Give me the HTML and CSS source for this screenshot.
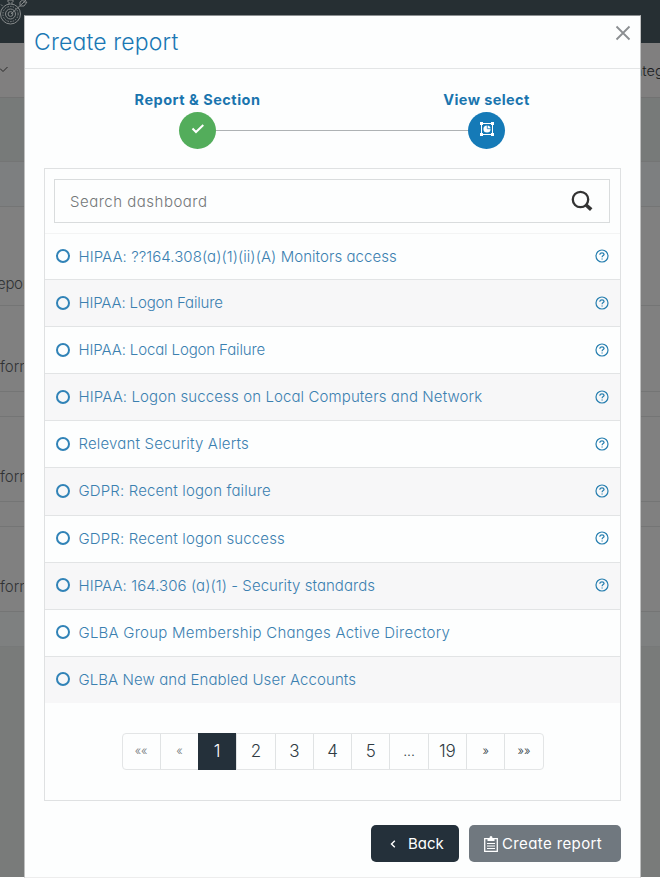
FILE: index.html
```html
<!DOCTYPE html>
<html lang="en">
<head>
<meta charset="utf-8">
<title>Create report</title>
<link rel="stylesheet" href="styles.css">
</head>
<body>
<svg class="defs" width="0" height="0">
  <symbol id="help" viewBox="0 0 14 14"><circle cx="7" cy="7" r="6" fill="none" stroke="currentColor" stroke-width="1.200"/><path d="M4.900 5.700V5.200Q5.100 3.800 7 3.800T9.100 5.300C9.100 6.700 7.100 6.500 7.100 8.300" fill="none" stroke="currentColor" stroke-width="1.200"/><path d="M6.500 9.400h1.200v1.200H6.500z" fill="currentColor"/></symbol>
</svg>
<div class="backdrop">
  <header class="topbar">
    <svg class="logo" width="28" height="28" viewBox="0 0 28 28" fill="none" stroke="#85898a" stroke-width="1">
      <circle cx="10.500" cy="15" r="10"/><circle cx="10.500" cy="15" r="7.600" stroke-dasharray="1.5 1.2"/><circle cx="10.500" cy="15" r="5"/><circle cx="10.500" cy="15" r="2.400"/>
      <path d="M8 3V1h5v2M9 5V3M12 5V3M2.500 7L1 5.500M11 15L23 4M20 6.500V3l4-3v3h3l-3 4h-4M22 5l4-4"/>
    </svg>
  </header>
  <nav class="subnav"><svg width="8" height="6" viewBox="0 0 8 6" fill="none" stroke="#292929" stroke-width="1"><path d="M0 1.500L3 4.500L7.500 0"/></svg><span class="nav-text">Integ</span></nav>
  <div class="band band-a"></div>
  <div class="band band-b"></div>
  <div class="band band-c"><span>epor</span></div>
  <div class="band band-d"><span>forn</span></div>
  <div class="band band-e"></div>
  <div class="band band-f"><span>forn</span></div>
  <div class="band band-e"></div>
  <div class="band band-g"><span>forn</span></div>
  <div class="band band-h"></div>
</div>
<main class="modal">
  <div class="modal-head">
    <h1>Create report</h1>
    <svg width="16" height="16" viewBox="0 0 16 16" stroke="#8b8e91" stroke-width="1.800"><path d="M1.500 1.500l13 13M14.500 1.500l-13 13"/></svg>
  </div>
  <div class="steps">
    <div class="step"><b class="label-a">Report &amp; Section</b><i class="dot done"><svg width="14" height="12" viewBox="0 0 14 12" fill="none" stroke="#fff" stroke-width="2"><path d="M1.500 5.500L5 9L12.300 2"/></svg></i></div>
    <div class="line"></div>
    <div class="step"><b class="label-b">View select</b><i class="dot current"><svg width="14" height="14" viewBox="0 0 14 14" stroke="#fff" fill="#fff"><path fill="none" d="M1.500 1.500h11v11h-11z"/><path stroke="none" d="M0 0h3v3H0zM11 0h3v3h-3zM0 11h3v3H0zM11 11h3v3h-3z"/><circle cx="7" cy="7" r="3.600" stroke="none"/><path fill="none" stroke="#157ab7" stroke-width=".8" d="M7.300 3V6.700H11"/></svg></i></div>
  </div>
  <section class="panel">
    <div class="search"><span>Search dashboard</span><svg width="22" height="22" viewBox="0 0 22 22" fill="none" stroke="#333"><circle cx="9.500" cy="9.500" r="7.700" stroke-width="2.300"/><path stroke-width="3.600" d="M14.500 14.500l5.700 5.200"/></svg></div>
    <ul class="list">
      <li><i></i><span class="t1">HIPAA: ??164.308(a)(1)(ii)(A) Monitors access</span><svg><use href="#help"/></svg></li>
      <li><i></i><span class="t2">HIPAA: Logon Failure</span><svg><use href="#help"/></svg></li>
      <li><i></i><span class="t3">HIPAA: Local Logon Failure</span><svg><use href="#help"/></svg></li>
      <li><i></i><span class="t4">HIPAA: Logon success on Local Computers and Network</span><svg><use href="#help"/></svg></li>
      <li><i></i><span class="t5">Relevant Security Alerts</span><svg><use href="#help"/></svg></li>
      <li><i></i><span class="t6">GDPR: Recent logon failure</span><svg><use href="#help"/></svg></li>
      <li><i></i><span class="t7">GDPR: Recent logon success</span><svg><use href="#help"/></svg></li>
      <li><i></i><span class="t8">HIPAA: 164.306 (a)(1) - Security standards</span><svg><use href="#help"/></svg></li>
      <li><i></i><span class="t9">GLBA Group Membership Changes Active Directory</span></li>
      <li><i></i><span class="t10">GLBA New and Enabled User Accounts</span></li>
    </ul>
    <nav class="pages"><a class="arrow muted">««</a><a class="arrow muted">«</a><a class="active">1</a><a>2</a><a>3</a><a>4</a><a>5</a><a class="dots">...</a><a>19</a><a class="arrow">»</a><a class="arrow">»»</a></nav>
  </section>
  <footer class="actions">
    <button class="back"><svg width="6" height="8" viewBox="0 0 6 8" fill="none" stroke="#fff" stroke-width="1.400"><path d="M4.800 .8L1.500 4l3.300 3.200"/></svg><span>Back</span></button>
    <button class="create"><svg width="14" height="16" viewBox="0 0 14 16" fill="none" stroke="#fff" stroke-width="1.300"><path d="M.7 2.700h12.600v12.600H.7z"/><path stroke-width="1" d="M3 7.500h8M3 10h8M3 12.500h8"/><path fill="#fff" stroke="none" d="M3.500 2h2Q5.500 0 7 0t1.500 2h2v3h-7z"/></svg><span>Create report</span></button>
  </footer>
</main>
</body>
</html>
```

FILE: styles.css
```css
* { box-sizing: border-box; }
body { margin: 0; width: 660px; height: 886px; overflow: hidden; position: relative; background: #fff; font-family: Inter, "Open Sans", sans-serif; font-feature-settings: "cv11"; font-weight: 300; }
.defs { position: absolute; }
span, b, h1 { white-space: nowrap; }
.backdrop { height: 877px; display: flex; flex-direction: column; background: #797b7a; overflow: hidden; color: #303335; font-size: 15px; }
.topbar { height: 43px; background: #262f33; flex: none; }
.logo { display: block; margin-top: -1px; }
.subnav { height: 55px; background: #807f7f; border-bottom: 1px solid #727272; display: flex; align-items: center; justify-content: space-between; flex: none; }
.nav-text { width: 30px; color: #1b1d1e; font-size: 14.500px; }
.band { flex: none; border-bottom: 1px solid #747575; background: #808080; }
.band span { display: block; line-height: 20px; }
.band-a { height: 64px; background: #777a79; }
.band-b { height: 45px; background: #7d7f80; }
.band-c { height: 99px; padding-top: 67px; }
.band-c span { margin-left: -3px; letter-spacing: -.3px; }
.band-d { height: 86px; padding-top: 51px; }
.band-e { height: 25px; }
.band-f { height: 85px; padding-top: 50px; }
.band-g { height: 85px; padding-top: 50px; }
.band-h { height: 35px; background: #7e8080; border-color: #777979; }
.modal { position: absolute; left: 24px; top: 15px; width: 617px; height: 863px; background: #fdfefe; border: 1px solid #bfc0c0; border-top-color: #8c9092; border-bottom-color: #ededed; }
.modal-head { height: 53px; border-bottom: 1px solid #e3e5e6; display: flex; justify-content: space-between; align-items: flex-start; padding: 9px 9px 0; }
h1 { margin: 0; font-size: 23px; line-height: 34px; font-weight: 300; color: #1a78b4; letter-spacing: .15px; }
.steps { display: flex; align-items: flex-end; height: 80px; padding: 0 135px 0 154px; }
.step { display: flex; flex-direction: column; align-items: center; flex: none; width: 37px; }
.step b { font-size: 14.500px; line-height: 25px; font-weight: 700; color: #1a75ae; }
.label-a { letter-spacing: .5px; }
.label-b { letter-spacing: .38px; }
.dot { width: 37px; height: 37px; border-radius: 50%; display: grid; place-items: center; }
.dot svg { margin-top: -3px; }
.done { background: #53ad5b; }
.current { background: #157ab7; }
.line { height: 1px; background: #aeb2b4; flex: 1; margin-bottom: 18px; }
.panel { margin: 19px 19px 0; height: 633px; border: 1px solid #dfe1e2; padding-top: 10px; }
.search { height: 44px; margin: 0 10px 0 9px; border: 1px solid #d9dcdd; display: flex; align-items: center; justify-content: space-between; padding: 0 16px 0 15px; color: #737779; font-size: 15px; }
.search span { letter-spacing: .5px; }
.list { margin: 10px 0 0; padding: 0; list-style: none; border-top: 1px solid #f3f4f4; color: #3b80b0; font-size: 15px; }
.list li { height: 47.120px; display: flex; align-items: center; padding: 0 12px 1px 11px; border-bottom: 1px solid #e2e4e5; }
.list li:first-child { height: 46px; }
.list li:nth-child(even) { background: #f7f7f8; }
.list li:last-child { border: 0; height: 46px; }
.list i { width: 14px; height: 14px; border: 2px solid #3183b7; border-radius: 50%; margin-right: 8.500px; flex: none; }
.list svg { width: 14px; height: 14px; margin-left: auto; margin-right: -1px; color: #267eaf; }
.t1 { letter-spacing: .06px; }
.t2 { letter-spacing: -.16px; }
.t3 { letter-spacing: -.13px; }
.t4 { letter-spacing: .11px; }
.t5 { letter-spacing: .17px; }
.t6, .t7 { letter-spacing: .14px; }
.t8 { letter-spacing: .06px; }
.t9 { letter-spacing: .23px; }
.t10 { letter-spacing: .08px; }
.pages { margin: 30px auto 0; width: 422px; height: 37px; border: 1px solid #e3e5e6; border-radius: 4px; display: flex; color: #2f3b43; font-size: 17px; }
.pages a { flex: 1 1 0; min-width: 0; border-right: 1px solid #e0e3e4; display: grid; place-items: center; line-height: 34px; }
.pages a:last-child { border: 0; }
.pages .active { background: #24303a; color: #fff; margin: -1px 0 -1px -1px; flex-grow: 1.030; }
.pages .arrow { font-size: 12px; }
.pages .muted { color: #777d81; }
.pages .dots { font-size: 14px; }
.actions { display: flex; justify-content: flex-end; gap: 10px; margin: 24px 19px 0; }
button { height: 37px; border: 0; border-radius: 5px; color: #fff; font: 400 15px Inter, sans-serif; font-feature-settings: "cv11"; display: flex; align-items: center; padding: 0; }
.back { width: 88px; background: #24303a; padding-left: 19px; gap: 12px; }
.create { width: 152px; background: #70787f; padding-left: 15px; gap: 4px; letter-spacing: .38px; }
```
